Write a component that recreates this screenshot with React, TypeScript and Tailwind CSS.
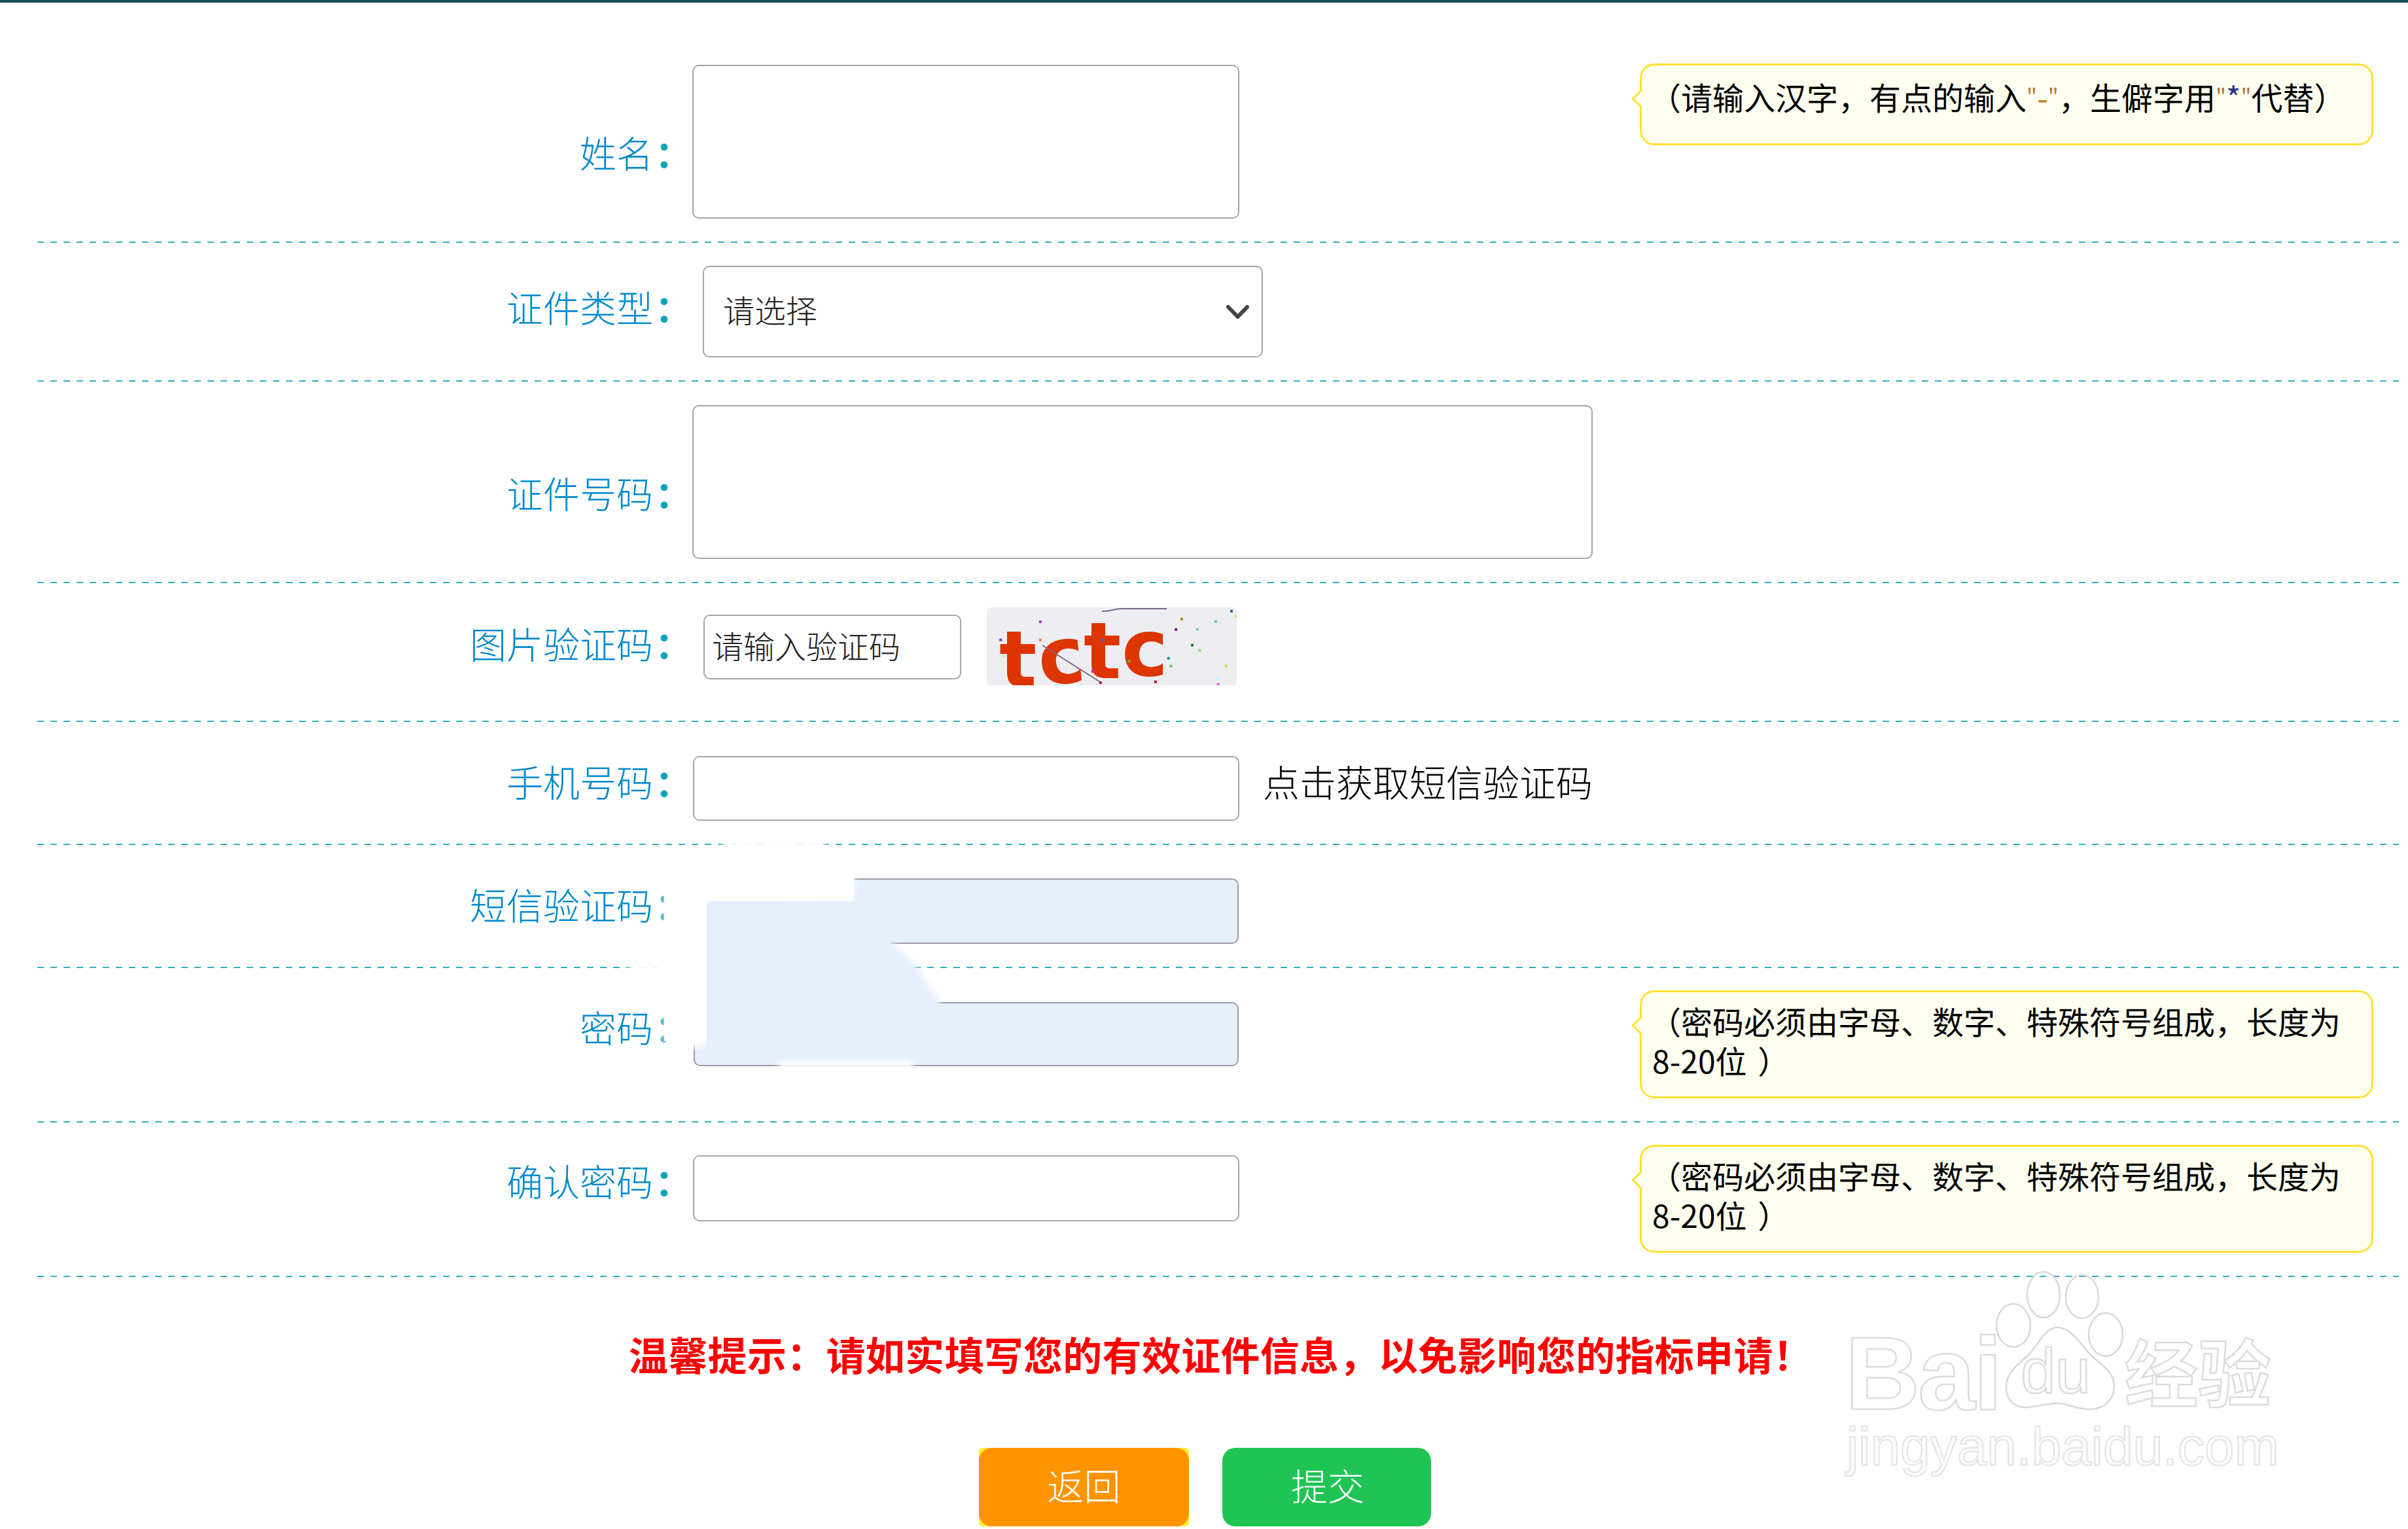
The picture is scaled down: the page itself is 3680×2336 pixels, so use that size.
import React from "react";

const inputCls = "block shrink-0 bg-white border-2 border-[#a8a4a6] rounded-[10px] outline-none";
const filledCls = "block shrink-0 bg-[#e6effc] border-2 border-[#a09aa6] rounded-[10px] outline-none";

function Label({ text, cls }: { text: string; cls: string }) {
  return (
    <div className={"w-[994px] shrink-0 text-right text-[56px] leading-[60px] font-light text-[#0088cc] " + cls}>
      <span className="relative left-[3px]">{text}</span>
      <span className="relative left-[6px] font-bold text-[#0aa3b5]">：</span>
    </div>
  );
}

function Row({ cls, children }: { cls: string; children: React.ReactNode }) {
  return (
    <div className={"flex items-start bg-[repeating-linear-gradient(90deg,#2fb0c0_0_10px,transparent_10px_20px)] bg-[length:100%_2px] bg-bottom bg-no-repeat " + cls}>
      {children}
    </div>
  );
}

function Bubble({ cls, children }: { cls: string; children: React.ReactNode }) {
  return (
    <div className={"relative ml-auto mr-[39px] w-[1121px] shrink-0 bg-[#fffff0] border-[3px] border-[#ffe033] rounded-[22px] pl-[16px] pr-[10px] text-[48px] leading-[60px] font-normal text-black [word-spacing:6px] indent-[-4px] " + cls}>
      <span className="absolute left-[-12px] top-[42px] w-[18px] h-[18px] rotate-45 bg-[#fffff0] border-l-[3px] border-b-[3px] border-[#ffe033]" />
      {children}
    </div>
  );
}

function Quote() {
  return <span className="text-[34px] text-[#b8763a] align-[8px]">"</span>;
}

const dots: [number, number, string][] = [
  [925, 210, "#b030c0"], [830, 293, "#9933cc"], [925, 293, "#f08060"], [837, 365, "#aaeeee"],
  [1050, 437, "#cc3388"], [1075, 293, "#4466dd"], [1138, 390, "#88aa22"], [1201, 485, "#cc0022"],
  [1232, 377, "#119999"], [1238, 413, "#77bb55"], [1289, 317, "#117733"], [1307, 341, "#77ee55"],
  [1250, 245, "#771199"], [1264, 197, "#aa8800"], [1301, 245, "#66cccc"], [1345, 209, "#44dd77"],
  [1383, 161, "#116699"], [1395, 185, "#99ee33"], [1370, 413, "#eecc55"], [1351, 473, "#aaffff"],
  [1351, 497, "#ee55ee"], [1069, 489, "#bb1155"],
];

function Captcha() {
  return (
    <div className="relative ml-[39px] mt-[37px] w-[382px] h-[119px] shrink-0 overflow-hidden bg-[#eeeef2] rounded-[6px] font-['DejaVu_Sans',sans-serif] font-bold text-[120px] leading-[120px] text-[#dd3500]">
      <span className="absolute left-[19px] top-[20px]">t</span>
      <span className="absolute left-[78px] top-[15px] rotate-[-6deg]">c</span>
      <span className="absolute left-[148px] top-[7px]">t</span>
      <span className="absolute left-[206px] top-[3px]">c</span>
      <svg className="absolute inset-0" width="382" height="119" viewBox="0 0 382 119">
        <path d="M176 6 C190 6 195 2 205 2 L275 2" fill="none" stroke="#776688" strokeWidth="2" />
        <path d="M85 58 L175 115" fill="none" stroke="#886688" strokeWidth="2" />
        {dots.map(([x, y, c], i) => (
          <rect key={i} x={x / 1.568 - 510} y={y / 3 - 50} width="4" height="4" fill={c} />
        ))}
      </svg>
    </div>
  );
}

function Smudge() {
  return (
    <svg className="absolute left-0 top-0 pointer-events-none" width="3680" height="2336" viewBox="0 0 3680 2336">
      <defs>
        <filter id="soft" x="-20%" y="-20%" width="140%" height="140%">
          <feGaussianBlur stdDeviation="5" />
        </filter>
      </defs>
      <g filter="url(#soft)" fill="#ffffff">
        <rect x="1104" y="1284" width="156" height="60" />
        <rect x="1015" y="1335" width="290" height="42" />
        <rect x="1015" y="1335" width="64" height="265" />
        <rect x="961" y="1470" width="119" height="16" />
        <rect x="1190" y="1619" width="205" height="14" />
      </g>
      <rect x="1015" y="1340" width="65" height="250" fill="#ffffff" />
      <rect x="1030" y="1340" width="275" height="37" fill="#ffffff" />
      <polygon points="1200,1380 1310,1377 1322,1420 1368,1443 1402,1478 1436,1531 1440,1560 1420,1617 1200,1617" fill="#e6effc" filter="url(#soft)" />
      <rect x="1080" y="1377" width="280" height="240" rx="6" fill="#e6effc" />
    </svg>
  );
}

function Watermark() {
  const stroke = "[-webkit-text-stroke:2.5px_#dcdcdc] text-transparent";
  return (
    <div className="absolute left-[2800px] top-[1930px] w-[700px] h-[350px] pointer-events-none">
      <svg className="absolute inset-0" width="700" height="350" viewBox="0 0 700 350" fill="none" stroke="#d8d8d8" strokeWidth="2.5">
        <ellipse cx="277" cy="95" rx="26" ry="33" />
        <ellipse cx="323" cy="48" rx="25" ry="35" />
        <ellipse cx="382" cy="51" rx="25" ry="33" />
        <ellipse cx="418" cy="109" rx="26" ry="33" />
        <path d="M344 98 C325 98 315 125 300 140 C285 155 266 165 266 190 C266 210 280 222 300 220 C320 218 330 214 344 214 C360 214 375 224 395 223 C418 222 431 207 431 187 C431 165 410 155 395 140 C378 122 365 98 344 98 Z" />
      </svg>
      <span className={"absolute left-[20px] top-[103px] text-[158px] leading-[130px] font-bold tracking-[-3px] font-['Liberation_Sans',sans-serif] " + stroke}>Bai</span>
      <span className={"absolute left-[288px] top-[110px] text-[96px] leading-[110px] font-['Liberation_Sans',sans-serif] " + stroke}>du</span>
      <span className={"absolute left-[447px] top-[102px] text-[112px] leading-[120px] font-bold whitespace-nowrap " + stroke}>经验</span>
      <span className="absolute left-[22px] top-[240px] text-[82px] leading-[80px] whitespace-nowrap font-['Liberation_Sans',sans-serif] [-webkit-text-stroke:2.5px_#e6e6e6] text-transparent">jingyan.baidu.com</span>
    </div>
  );
}

export default function App() {
  return (
    <div className="relative w-[3680px] h-[2336px] overflow-hidden bg-white font-['Noto_Sans_CJK_SC','Liberation_Sans',sans-serif] text-black">
      <div className="h-[4px] bg-[#17485a]" />
      <div className="ml-[57px] w-[3609px]">
        <Row cls="h-[367px]">
          <Label text="姓名" cls="mt-[198px]" />
          <input className={inputCls + " ml-[7px] mt-[95px] w-[836px] h-[235px]"} />
          <Bubble cls="mt-[93px] h-[125px] pt-[16px]">
            （请输入汉字，有点的输入<Quote /><span className="text-[#c08020]">-</span><Quote />，生僻字用<Quote /><span className="text-[#223388]">*</span><Quote />代替）
          </Bubble>
        </Row>
        <Row cls="h-[212px]">
          <Label text="证件类型" cls="mt-[67px]" />
          <div className="relative ml-[23px] mt-[35px] w-[856px] h-[140px] shrink-0">
            <select className={inputCls + " appearance-none w-full h-full pl-[29px] pb-[8px] text-[48px] font-light text-[#222]"} defaultValue="">
              <option value="">请选择</option>
            </select>
            <svg className="absolute right-[21px] top-[60px]" width="35" height="22" viewBox="0 0 35 22" fill="none" stroke="#444" strokeWidth="6" strokeLinecap="round" strokeLinejoin="round">
              <path d="M3 3 L17.5 18 L32 3" />
            </svg>
          </div>
        </Row>
        <Row cls="h-[308px]">
          <Label text="证件号码" cls="mt-[139px]" />
          <input className={inputCls + " ml-[7px] mt-[36px] w-[1376px] h-[235px]"} />
        </Row>
        <Row cls="h-[212px]">
          <Label text="图片验证码" cls="mt-[61px]" />
          <input className={inputCls + " ml-[24px] mt-[48px] w-[394px] h-[99px] pl-[11px] pb-[8px] text-[48px] font-light placeholder:text-[#222] placeholder:opacity-100"} placeholder="请输入验证码" />
          <Captcha />
        </Row>
        <Row cls="h-[188px]">
          <Label text="手机号码" cls="mt-[60px]" />
          <input className={inputCls + " ml-[8px] mt-[52px] w-[835px] h-[99px]"} />
          <div className="ml-[36px] mt-[60px] text-[56px] leading-[60px] font-light whitespace-nowrap">点击获取短信验证码</div>
        </Row>
        <Row cls="h-[188px]">
          <Label text="短信验证码" cls="mt-[60px]" />
          <input className={filledCls + " ml-[9px] mt-[51px] w-[833px] h-[100px]"} />
        </Row>
        <Row cls="h-[236px]">
          <Label text="密码" cls="mt-[59px]" />
          <input className={filledCls + " ml-[9px] mt-[52px] w-[833px] h-[98px]"} />
          <Bubble cls="mt-[34px] h-[165px] pt-[13px]">
            （密码必须由字母、数字、特殊符号组成，长度为8-20位 ）
          </Bubble>
        </Row>
        <Row cls="h-[236px]">
          <Label text="确认密码" cls="mt-[58px]" />
          <input className={inputCls + " ml-[8px] mt-[50px] w-[835px] h-[101px]"} />
          <Bubble cls="mt-[34px] h-[165px] pt-[13px]">
            （密码必须由字母、数字、特殊符号组成，长度为8-20位 ）
          </Bubble>
        </Row>
        <div className="pt-[81px] pl-[8px] text-center text-[60px] leading-[72px] font-bold tracking-[0.3px] text-[#ff0000] whitespace-nowrap">
          温馨提示：请如实填写您的有效证件信息，以免影响您的指标申请！
        </div>
        <div className="flex mt-[108px] ml-[1439px] gap-[51px]">
          <div className="w-[321px] h-[120px] bg-[#ffee33] rounded-[6px]">
            <button className="w-full h-full pb-[8px] bg-[#ff9400] rounded-[20px] text-white text-[56px] font-light">返回</button>
          </div>
          <button className="w-[319px] h-[120px] pb-[8px] pl-[3px] bg-[#1fc454] rounded-[20px] text-white text-[56px] font-light">提交</button>
        </div>
      </div>
      <Smudge />
      <Watermark />
    </div>
  );
}
